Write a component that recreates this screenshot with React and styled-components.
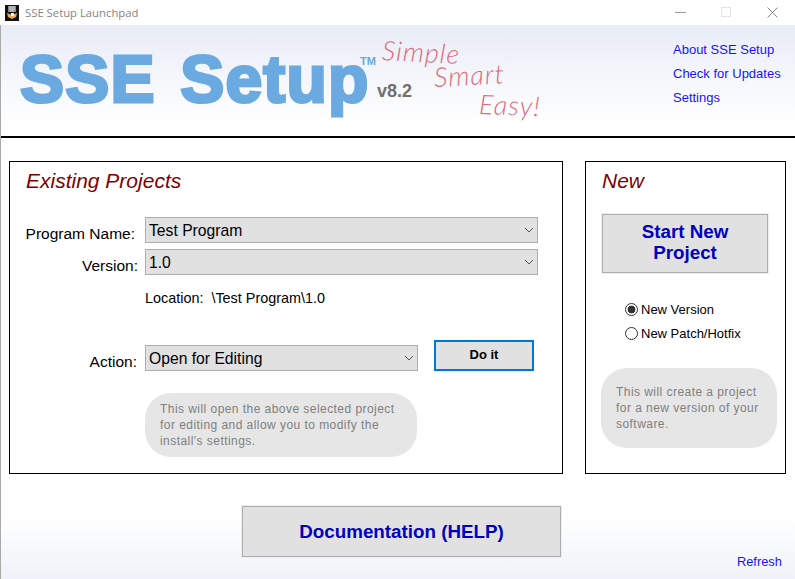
import React from "react";
import styled, { createGlobalStyle } from "styled-components";

const GlobalStyle = createGlobalStyle`
  html, body {
    margin: 0;
    padding: 0;
    background: #fff;
  }
  * {
    box-sizing: border-box;
  }
`;

const Window = styled.div`
  width: 795px;
  height: 579px;
  overflow: hidden;
  display: flex;
  flex-direction: column;
  font-family: "Liberation Sans", Arial, sans-serif;
  color: #000;
  background: #fff;
`;

const TitleBar = styled.div`
  height: 25px;
  flex: none;
  display: flex;
  align-items: center;
  padding-left: 5px;
`;

const TitleText = styled.span`
  margin-left: 6px;
  font-family: "Open Sans", sans-serif;
  font-size: 11.3px;
  color: #858585;
`;

const WindowControls = styled.div`
  margin-left: auto;
  display: flex;
  align-items: center;
  padding-right: 17px;
  gap: 35px;
`;

const Content = styled.div`
  flex: 1;
  display: flex;
  flex-direction: column;
  border-left: 1px solid #a9a9a9;
`;

const Header = styled.header`
  height: 113px;
  flex: none;
  display: flex;
  border-bottom: 2px solid #000;
  background: linear-gradient(#e8ecf5, #f5f7fb 50%, #fff 90%);
`;

const Logo = styled.div`
  width: 340px;
  margin: 18px 0 0 19px;
  font-size: 66px;
  line-height: 72px;
  font-weight: 700;
  letter-spacing: 1.2px;
  word-spacing: 5px;
  color: #6aaae0;
  -webkit-text-stroke: 3px #6aaae0;
  white-space: pre;
`;

const Trademark = styled.span`
  width: 17px;
  margin-top: 30px;
  font-size: 11px;
  font-weight: 700;
  color: #6aaae0;
`;

const VersionTag = styled.span`
  margin: 56px 0 0 0;
  font-size: 18px;
  font-weight: 700;
  color: #707070;
`;

const Tagline = styled.div`
  width: 170px;
  margin-left: -30px;
  padding-top: 11px;
  display: flex;
  flex-direction: column;
  font-family: "Lato", sans-serif;
  font-weight: 300;
  font-style: italic;
  font-size: 27px;
  line-height: 27px;
  color: #df6a7c;
`;

const TagWord = styled.span`
  margin-left: ${(p) => p.$indent}px;
  transform: rotate(${(p) => p.$tilt}deg);
  transform-origin: left center;
  letter-spacing: 1px;
`;

const HeaderLinks = styled.nav`
  margin-left: auto;
  width: 122px;
  padding-top: 13px;
  display: flex;
  flex-direction: column;
`;

const BlueLink = styled.a`
  font-size: 13px;
  line-height: 24px;
  color: #1515f5;
  white-space: nowrap;
`;

const Body = styled.main`
  flex: 1;
  display: flex;
  flex-direction: column;
  padding: 23px 0 0 8px;
  background: linear-gradient(#fff 380px, #eff2f8 100%);
`;

const Panels = styled.div`
  display: flex;
  gap: 22px;
`;

const Panel = styled.section`
  width: ${(p) => p.$width}px;
  height: 313px;
  border: 1px solid #000;
  padding-left: ${(p) => p.$inset}px;
`;

const PanelTitle = styled.h2`
  margin: 6px 0 0;
  font-size: 21px;
  line-height: 26px;
  font-weight: 400;
  font-style: italic;
  color: #800000;
`;

const Form = styled.div`
  margin-top: 23px;
  margin-left: -16px;
`;

const FieldRow = styled.div`
  display: flex;
  align-items: flex-end;
  margin-top: ${(p) => p.$top}px;
`;

const Label = styled.label`
  width: ${(p) => p.$width}px;
  margin-right: ${(p) => 135 - p.$width}px;
  margin-bottom: -1px;
  font-size: 15.5px;
  line-height: 20px;
  text-align: right;
  white-space: nowrap;
`;

const SelectWrap = styled.div`
  position: relative;
  width: ${(p) => p.$width}px;
  height: 26px;
`;

const Select = styled.select`
  appearance: none;
  width: 100%;
  height: 100%;
  padding: 0 0 0 3px;
  border: 1px solid #adadad;
  border-radius: 0;
  background: #e1e1e1;
  font-family: inherit;
  font-size: 15.7px;
  color: #000;
`;

const Chevron = styled.svg`
  position: absolute;
  right: 4px;
  top: 10px;
  pointer-events: none;
`;

const Location = styled.div`
  margin: 14px 0 0 135px;
  font-size: 14.4px;
  line-height: 18px;
  white-space: pre;
`;

const ActionButton = styled.button`
  width: 100px;
  height: 31px;
  margin-left: 16px;
  border: 2px solid #0078d7;
  background: #e1e1e1;
  font-family: inherit;
  font-size: 13px;
  font-weight: 700;
  padding: 0 0 2px;
  color: #000;
`;

const Hint = styled.p`
  width: ${(p) => p.$width}px;
  height: ${(p) => p.$height}px;
  margin: ${(p) => p.$top}px 0 0 ${(p) => p.$left}px;
  padding: ${(p) => p.$pad};
  border-radius: 26px;
  background: #e6e6e6;
  color: #808080;
  font-size: 12px;
  line-height: 16px;
  letter-spacing: 0.45px;
`;

const BigButton = styled.button`
  display: block;
  width: ${(p) => p.$width}px;
  height: ${(p) => p.$height}px;
  margin-top: ${(p) => p.$top || 0}px;
  border: 1px solid #adadad;
  box-shadow: 0 0 0 1px #eeeeee;
  background: #e1e1e1;
  color: #0000c0;
  font-family: inherit;
  font-size: 18.8px;
  line-height: 21px;
  font-weight: 700;
  padding: 0 0 ${(p) => p.$lift || 0}px;
`;

const RadioGroup = styled.div`
  margin: 26px 0 0 23px;
  display: flex;
  flex-direction: column;
  gap: 4px;
`;

const RadioLabel = styled.label`
  display: flex;
  align-items: center;
  height: 20px;
  font-size: 13px;
`;

const Radio = styled.input`
  appearance: none;
  width: 13px;
  height: 13px;
  margin: 0 3px 0 0;
  border: 1px solid #333;
  border-radius: 50%;
  background: #fff;
  &:checked {
    background: radial-gradient(circle, #333 3.6px, #fff 4.2px);
  }
`;

const Footer = styled.footer`
  display: flex;
  margin-top: 32px;
  padding-left: 233px;
`;

const RefreshLink = styled(BlueLink)`
  margin: 48px 0 0 176px;
  line-height: 16px;
  font-size: 12.8px;
`;

function AppIcon() {
  return (
    <svg width="14" height="16" viewBox="0 0 14 16">
      <rect width="14" height="16" fill="#111" />
      <rect x="3" y="1" width="8" height="6" fill="#8a8a8a" />
      <path d="M4 2h6M4 4h6M5 6h4" stroke="#ddd" strokeWidth="1" />
      <path d="M2 8l5 2 5-2-1 4-4 2-4-2z" fill="#e8a860" />
      <rect x="6" y="8" width="3" height="3" fill="#fff" />
    </svg>
  );
}

function SelectField({ width, value }) {
  return (
    <SelectWrap $width={width}>
      <Select defaultValue={value}>
        <option>{value}</option>
      </Select>
      <Chevron width="10" height="6" viewBox="0 0 10 6">
        <path d="M1 1l4 4 4-4" fill="none" stroke="#555" strokeWidth="1" />
      </Chevron>
    </SelectWrap>
  );
}

export default function App() {
  return (
    <Window>
      <GlobalStyle />
      <TitleBar>
        <AppIcon />
        <TitleText>SSE Setup Launchpad</TitleText>
        <WindowControls>
          <svg width="11" height="11" viewBox="0 0 11 11">
            <path d="M0 5.5h11" stroke="#9a9a9a" />
          </svg>
          <svg width="11" height="11" viewBox="0 0 11 11">
            <rect x="0.5" y="0.5" width="9" height="9" fill="none" stroke="#e4e4e4" />
          </svg>
          <svg width="11" height="11" viewBox="0 0 11 11">
            <path d="M0.5 0.5l10 10M10.5 0.5l-10 10" stroke="#8a8a8a" />
          </svg>
        </WindowControls>
      </TitleBar>
      <Content>
        <Header>
          <Logo>SSE Setup</Logo>
          <Trademark>TM</Trademark>
          <VersionTag>v8.2</VersionTag>
          <Tagline>
            <TagWord $indent={0} $tilt={3}>Simple</TagWord>
            <TagWord $indent={52} $tilt={-3}>Smart</TagWord>
            <TagWord $indent={97} $tilt={2}>Easy!</TagWord>
          </Tagline>
          <HeaderLinks>
            <BlueLink>About SSE Setup</BlueLink>
            <BlueLink>Check for Updates</BlueLink>
            <BlueLink>Settings</BlueLink>
          </HeaderLinks>
        </Header>
        <Body>
          <Panels>
            <Panel $width={554} $inset={16}>
              <PanelTitle>Existing Projects</PanelTitle>
              <Form>
                <FieldRow>
                  <Label $width={125}>Program Name:</Label>
                  <SelectField width={393} value="Test Program" />
                </FieldRow>
                <FieldRow $top={6}>
                  <Label $width={128}>Version:</Label>
                  <SelectField width={393} value="1.0" />
                </FieldRow>
                <Location>{"Location:  \\Test Program\\1.0"}</Location>
                <FieldRow $top={33}>
                  <Label $width={127}>Action:</Label>
                  <SelectField width={273} value="Open for Editing" />
                  <ActionButton>Do it</ActionButton>
                </FieldRow>
                <Hint $width={272} $height={64} $top={22} $left={135} $pad="8px 15px">
                  This will open the above selected project for editing and allow
                  you to modify the install's settings.
                </Hint>
              </Form>
            </Panel>
            <Panel $width={201} $inset={16}>
              <PanelTitle>New</PanelTitle>
              <BigButton $width={166} $height={59} $top={20} $lift={3}>
                Start New
                <br />
                Project
              </BigButton>
              <RadioGroup>
                <RadioLabel>
                  <Radio type="radio" name="kind" defaultChecked />
                  New Version
                </RadioLabel>
                <RadioLabel>
                  <Radio type="radio" name="kind" />
                  New Patch/Hotfix
                </RadioLabel>
              </RadioGroup>
              <Hint $width={176} $height={80} $top={25} $left={-1} $pad="16px 12px 0 15px">
                This will create a project for a new version of your software.
              </Hint>
            </Panel>
          </Panels>
          <Footer>
            <BigButton $width={319} $height={51}>Documentation (HELP)</BigButton>
            <RefreshLink>Refresh</RefreshLink>
          </Footer>
        </Body>
      </Content>
    </Window>
  );
}
